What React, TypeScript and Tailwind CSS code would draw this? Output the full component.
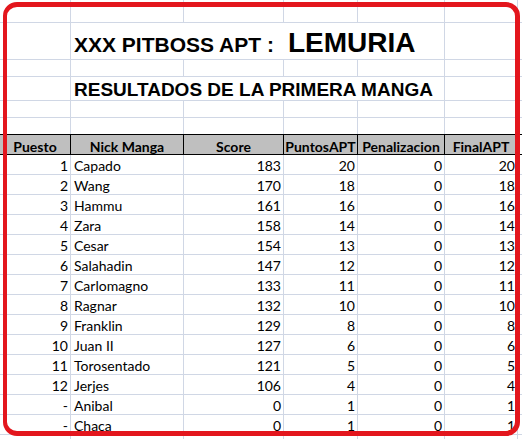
// Hoja de resultados — primera manga (Pitboss APT)

const COLS = ["w-[71px]", "w-[113px]", "w-[100px]", "w-[74px]", "w-[87px]", "w-[73px]"];

const HEADERS = ["Puesto", "Nick Manga", "Score", "PuntosAPT", "Penalizacion", "FinalAPT"];

const ROWS: [string, string, number, number, number, number][] = [
  ["1", "Capado", 183, 20, 0, 20],
  ["2", "Wang", 170, 18, 0, 18],
  ["3", "Hammu", 161, 16, 0, 16],
  ["4", "Zara", 158, 14, 0, 14],
  ["5", "Cesar", 154, 13, 0, 13],
  ["6", "Salahadin", 147, 12, 0, 12],
  ["7", "Carlomagno", 133, 11, 0, 11],
  ["8", "Ragnar", 132, 10, 0, 10],
  ["9", "Franklin", 129, 8, 0, 8],
  ["10", "Juan II", 127, 6, 0, 6],
  ["11", "Torosentado", 121, 5, 0, 5],
  ["12", "Jerjes", 106, 4, 0, 4],
  ["-", "Anibal", 0, 1, 0, 1],
  ["-", "Chaca", 0, 1, 0, 1],
];

function BlankRow({ h, line = "border-[#d0d7e5]" }: { h: string; line?: string }) {
  return (
    <div className={`flex ${h} border-b ${line}`}>
      {COLS.map((w, i) => (
        <div key={i} className={`${w} shrink-0 border-r border-[#d0d7e5]`} />
      ))}
      <div className="flex-1" />
    </div>
  );
}

export default function App() {
  return (
    <div className="relative w-[522px] h-[439px] overflow-hidden bg-white text-black font-['Lato',sans-serif]">
      {/* Cabecera */}
      <BlankRow h="h-[23px]" />
      <div className="flex h-[37px] border-b border-[#d0d7e5]">
        <div className="w-[71px] shrink-0 border-r border-[#d0d7e5]" />
        <div className="w-[374px] shrink-0 border-r border-[#d0d7e5] flex items-end pl-[3px] pb-[2px] whitespace-nowrap font-['Liberation_Sans',Arial,sans-serif] font-bold">
          <div className="flex items-baseline">
            <span className="text-[21px] leading-none">XXX PITBOSS APT :</span>
            <span className="ml-[14px] text-[28px] leading-none">LEMURIA</span>
          </div>
        </div>
        <div className="w-[73px] shrink-0 border-r border-[#d0d7e5]" />
        <div className="flex-1" />
      </div>
      <BlankRow h="h-[17px]" />
      <div className="flex h-[24px] border-b border-[#d0d7e5]">
        <div className="w-[71px] shrink-0 border-r border-[#d0d7e5]" />
        <div className="w-[374px] shrink-0 border-r border-[#d0d7e5] flex items-end pl-[3px] pb-[1px] whitespace-nowrap font-['Liberation_Sans',Arial,sans-serif] font-bold text-[19px] leading-none">
          RESULTADOS DE LA PRIMERA MANGA
        </div>
        <div className="w-[73px] shrink-0 border-r border-[#d0d7e5]" />
        <div className="flex-1" />
      </div>
      <BlankRow h="h-[17px]" />
      <BlankRow h="h-[17px]" line="border-black" />

      {/* Encabezado de tabla */}
      <div className="flex h-[20px] border-b border-black">
        {HEADERS.map((t, i) => (
          <div
            key={t}
            className={`${COLS[i]} shrink-0 border-r border-black bg-[#bfbfbf] flex items-end justify-center text-[14px] leading-none font-bold whitespace-nowrap`}
          >
            {t}
          </div>
        ))}
        <div className="flex-1" />
      </div>

      {/* Filas */}
      {ROWS.map((r) => (
        <div key={r[1]} className="flex h-[20px] border-b border-[#d0d7e5] text-[14px] leading-none">
          {r.map((v, i) => (
            <div
              key={i}
              className={`${COLS[i]} shrink-0 border-r border-[#d0d7e5] flex items-end pb-[1px] whitespace-nowrap ${
                i === 1 ? "justify-start pl-[3px]" : "justify-end pr-[2px]"
              }`}
            >
              {v}
            </div>
          ))}
          <div className="flex-1" />
        </div>
      ))}
      <BlankRow h="h-[20px]" />

      {/* Marco rojo */}
      <div className="pointer-events-none absolute left-[3px] top-[2px] w-[517px] h-[434px] rounded-[14px] border-t-[5px] border-l-4 border-r-[5px] border-b-[5px] border-[#e3161d]" />
    </div>
  );
}
